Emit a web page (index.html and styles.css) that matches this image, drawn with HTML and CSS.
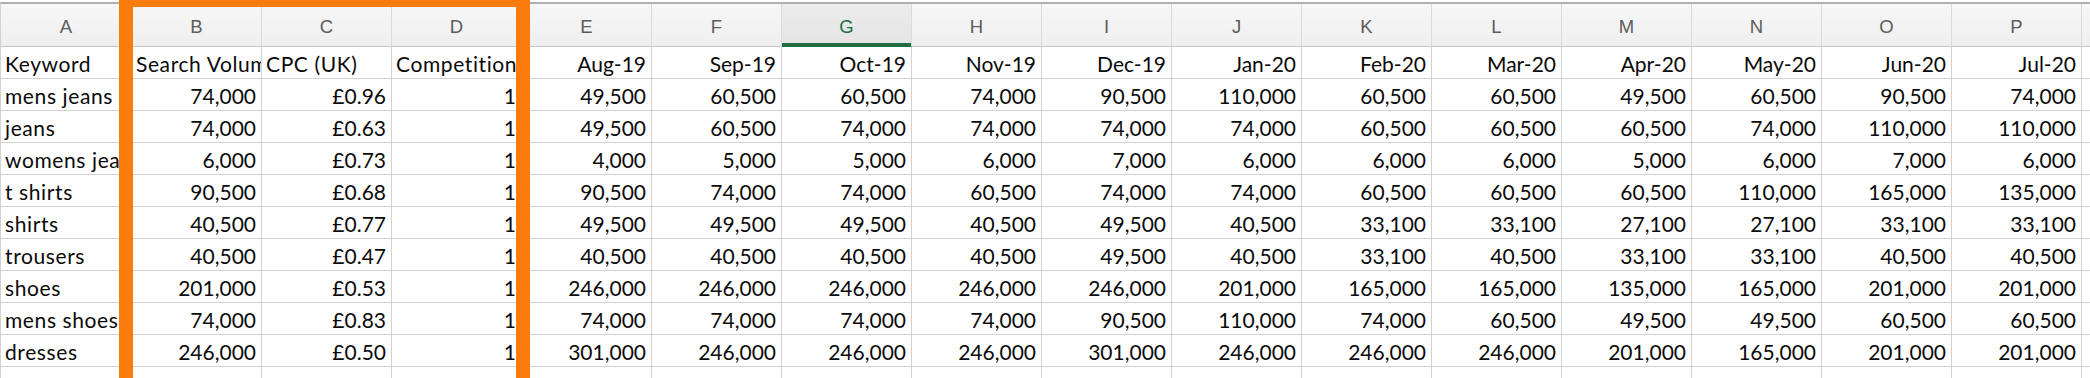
FILE: index.html
```html
<!DOCTYPE html>
<html>
<head>
<meta charset="utf-8">
<link rel="stylesheet" href="styles.css">
</head>
<body>
<div class="sheet">
  <div class="row hdr">
    <div class="ch">A</div><div class="ch">B</div><div class="ch">C</div><div class="ch">D</div><div class="ch">E</div><div class="ch">F</div><div class="ch sel">G</div><div class="ch">H</div><div class="ch">I</div><div class="ch">J</div><div class="ch">K</div><div class="ch">L</div><div class="ch">M</div><div class="ch">N</div><div class="ch">O</div><div class="ch">P</div><div class="ch">Q</div>
  </div>
  <div class="row">
    <div class="c t">Keyword</div><div class="c t">Search Volume</div><div class="c t">CPC (UK)</div><div class="c t">Competition</div><div class="c n">Aug-19</div><div class="c n">Sep-19</div><div class="c n">Oct-19</div><div class="c n">Nov-19</div><div class="c n">Dec-19</div><div class="c n">Jan-20</div><div class="c n">Feb-20</div><div class="c n">Mar-20</div><div class="c n">Apr-20</div><div class="c n">May-20</div><div class="c n">Jun-20</div><div class="c n">Jul-20</div><div class="c"></div>
  </div>
  <div class="row">
    <div class="c t">mens jeans</div><div class="c n">74,000</div><div class="c n">£0.96</div><div class="c n">1</div><div class="c n">49,500</div><div class="c n">60,500</div><div class="c n">60,500</div><div class="c n">74,000</div><div class="c n">90,500</div><div class="c n">110,000</div><div class="c n">60,500</div><div class="c n">60,500</div><div class="c n">49,500</div><div class="c n">60,500</div><div class="c n">90,500</div><div class="c n">74,000</div><div class="c"></div>
  </div>
  <div class="row">
    <div class="c t">jeans</div><div class="c n">74,000</div><div class="c n">£0.63</div><div class="c n">1</div><div class="c n">49,500</div><div class="c n">60,500</div><div class="c n">74,000</div><div class="c n">74,000</div><div class="c n">74,000</div><div class="c n">74,000</div><div class="c n">60,500</div><div class="c n">60,500</div><div class="c n">60,500</div><div class="c n">74,000</div><div class="c n">110,000</div><div class="c n">110,000</div><div class="c"></div>
  </div>
  <div class="row">
    <div class="c t">womens jeans</div><div class="c n">6,000</div><div class="c n">£0.73</div><div class="c n">1</div><div class="c n">4,000</div><div class="c n">5,000</div><div class="c n">5,000</div><div class="c n">6,000</div><div class="c n">7,000</div><div class="c n">6,000</div><div class="c n">6,000</div><div class="c n">6,000</div><div class="c n">5,000</div><div class="c n">6,000</div><div class="c n">7,000</div><div class="c n">6,000</div><div class="c"></div>
  </div>
  <div class="row">
    <div class="c t">t shirts</div><div class="c n">90,500</div><div class="c n">£0.68</div><div class="c n">1</div><div class="c n">90,500</div><div class="c n">74,000</div><div class="c n">74,000</div><div class="c n">60,500</div><div class="c n">74,000</div><div class="c n">74,000</div><div class="c n">60,500</div><div class="c n">60,500</div><div class="c n">60,500</div><div class="c n">110,000</div><div class="c n">165,000</div><div class="c n">135,000</div><div class="c"></div>
  </div>
  <div class="row">
    <div class="c t">shirts</div><div class="c n">40,500</div><div class="c n">£0.77</div><div class="c n">1</div><div class="c n">49,500</div><div class="c n">49,500</div><div class="c n">49,500</div><div class="c n">40,500</div><div class="c n">49,500</div><div class="c n">40,500</div><div class="c n">33,100</div><div class="c n">33,100</div><div class="c n">27,100</div><div class="c n">27,100</div><div class="c n">33,100</div><div class="c n">33,100</div><div class="c"></div>
  </div>
  <div class="row">
    <div class="c t">trousers</div><div class="c n">40,500</div><div class="c n">£0.47</div><div class="c n">1</div><div class="c n">40,500</div><div class="c n">40,500</div><div class="c n">40,500</div><div class="c n">40,500</div><div class="c n">49,500</div><div class="c n">40,500</div><div class="c n">33,100</div><div class="c n">40,500</div><div class="c n">33,100</div><div class="c n">33,100</div><div class="c n">40,500</div><div class="c n">40,500</div><div class="c"></div>
  </div>
  <div class="row">
    <div class="c t">shoes</div><div class="c n">201,000</div><div class="c n">£0.53</div><div class="c n">1</div><div class="c n">246,000</div><div class="c n">246,000</div><div class="c n">246,000</div><div class="c n">246,000</div><div class="c n">246,000</div><div class="c n">201,000</div><div class="c n">165,000</div><div class="c n">165,000</div><div class="c n">135,000</div><div class="c n">165,000</div><div class="c n">201,000</div><div class="c n">201,000</div><div class="c"></div>
  </div>
  <div class="row">
    <div class="c t">mens shoes</div><div class="c n">74,000</div><div class="c n">£0.83</div><div class="c n">1</div><div class="c n">74,000</div><div class="c n">74,000</div><div class="c n">74,000</div><div class="c n">74,000</div><div class="c n">90,500</div><div class="c n">110,000</div><div class="c n">74,000</div><div class="c n">60,500</div><div class="c n">49,500</div><div class="c n">49,500</div><div class="c n">60,500</div><div class="c n">60,500</div><div class="c"></div>
  </div>
  <div class="row">
    <div class="c t">dresses</div><div class="c n">246,000</div><div class="c n">£0.50</div><div class="c n">1</div><div class="c n">301,000</div><div class="c n">246,000</div><div class="c n">246,000</div><div class="c n">246,000</div><div class="c n">301,000</div><div class="c n">246,000</div><div class="c n">246,000</div><div class="c n">246,000</div><div class="c n">201,000</div><div class="c n">165,000</div><div class="c n">201,000</div><div class="c n">201,000</div><div class="c"></div>
  </div>
  <div class="row">
    <div class="c"></div><div class="c"></div><div class="c"></div><div class="c"></div><div class="c"></div><div class="c"></div><div class="c"></div><div class="c"></div><div class="c"></div><div class="c"></div><div class="c"></div><div class="c"></div><div class="c"></div><div class="c"></div><div class="c"></div><div class="c"></div><div class="c"></div>
  </div>
  <div class="outline"></div>
</div>
</body>
</html>
```

FILE: styles.css
```css
html, body {
  margin: 0;
  padding: 0;
  background: #ffffff;
  overflow: hidden;
}

.sheet {
  position: relative;
  width: max-content;
  margin-top: 2px;
  border-top: 2px solid #b0b0b0;
  border-left: 1px solid #d2d2d2;
}

.row {
  display: grid;
  grid-template-columns: 131px repeat(16, 130px);
}

.ch {
  box-sizing: border-box;
  height: 43px;
  padding-top: 4px;
  display: flex;
  align-items: center;
  justify-content: center;
  background: linear-gradient(#f7f7f7, #efefef);
  border-right: 1px solid #dadada;
  border-bottom: 1px solid #c4c4c4;
  font-family: "Liberation Sans", Arial, sans-serif;
  font-size: 18.5px;
  color: #5c5c5c;
}

.ch.sel {
  background: linear-gradient(#ececec, #e4e4e4);
  color: #1d6b3f;
  border-bottom-color: #1e6e42;
  box-shadow: inset 0 -3px 0 #1e6e42;
}

.c {
  box-sizing: border-box;
  height: 32px;
  padding: 2px 5px 0 4px;
  line-height: 29px;
  white-space: nowrap;
  overflow: hidden;
  border-right: 1px solid #d2d2d2;
  border-bottom: 1px solid #d2d2d2;
  font-family: Lato, "Open Sans", sans-serif;
  font-size: 21px;
  color: #0a0a0a;
}

.c.t {
  letter-spacing: 0.6px;
}

.c.n {
  text-align: right;
}

.outline {
  position: absolute;
  left: 118px;
  top: -11px;
  width: 411px;
  height: 400px;
  box-sizing: border-box;
  border: 14px solid #f97c0c;
  pointer-events: none;
}
```
